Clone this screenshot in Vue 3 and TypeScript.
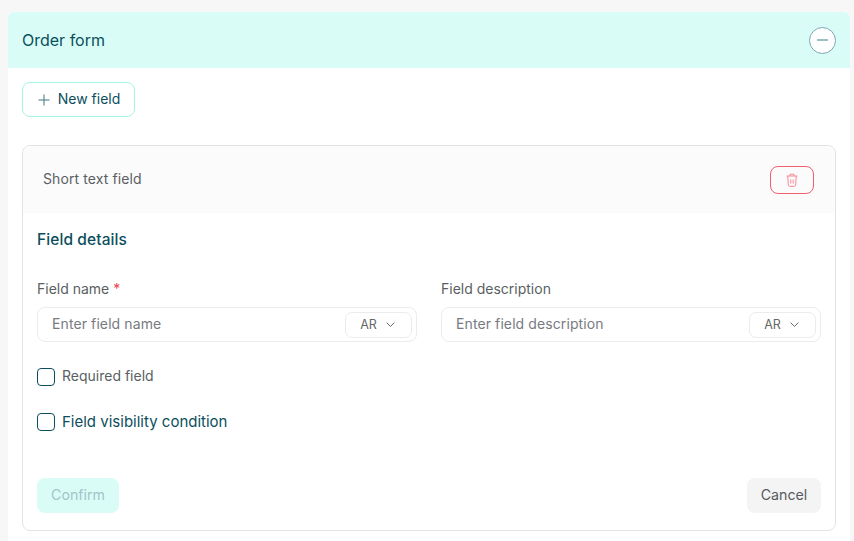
<template>
  <div class="page">
    <section class="panel">
      <header class="panel-head">
        <h1>Order form</h1>
        <button type="button" class="collapse-btn" aria-label="Collapse">
          <span class="minus"></span>
        </button>
      </header>
      <div class="panel-body">
        <button type="button" class="new-btn">
          <svg width="12" height="12" viewBox="0 0 12 12" fill="none" stroke="#3f7683" stroke-width="1">
            <path d="M6 .5v11M.5 6h11" />
          </svg>
          <span class="new-text">New field</span>
        </button>
        <div class="card">
          <div class="card-head">
            <span class="head-title">Short text field</span>
            <button type="button" class="trash-btn" aria-label="Delete">
              <svg width="14" height="14" viewBox="0 0 14 14" fill="none" stroke="#f58a93" stroke-width="1">
                <path d="M1.5 3h11M5 3V1.2h4V3M2.8 3l.5 9.2c0 .7.5 1.1 1.1 1.1h5.2c.6 0 1.1-.4 1.1-1.1l.5-9.2M5.8 6.5v4M8.2 6.5v4" />
              </svg>
            </button>
          </div>
          <div class="card-body">
            <h2>Field details</h2>
            <div class="field-grid">
              <div v-for="f in fields" :key="f.label" class="field">
                <label>{{ f.label }} <em v-if="f.required">*</em></label>
                <div class="input-box">
                  <input type="text" :placeholder="f.placeholder" />
                  <button type="button" class="lang-btn">
                    <span>AR</span>
                    <svg width="9" height="5" viewBox="0 0 9 5" fill="none" stroke="#666" stroke-width="1">
                      <path d="M.6.6 4.5 4.4 8.4.6" />
                    </svg>
                  </button>
                </div>
              </div>
            </div>
            <label class="check first">
              <span class="box"></span>
              <span class="check-text">Required field</span>
            </label>
            <label class="check second">
              <span class="box"></span>
              <span>Field visibility condition</span>
            </label>
            <div class="actions">
              <button type="button" class="confirm-btn">Confirm</button>
              <button type="button" class="cancel-btn">Cancel</button>
            </div>
          </div>
        </div>
      </div>
    </section>
  </div>
</template>

<script setup lang="ts">
const fields = [
  { label: 'Field name', placeholder: 'Enter field name', required: true },
  { label: 'Field description', placeholder: 'Enter field description', required: false },
]
</script>

<style>
html,
body {
  margin: 0;
  background: #f7f7f7;
}
</style>

<style scoped>
.page {
  height: 541px;
  padding: 12px 4px 0 8px;
  box-sizing: border-box;
  overflow: hidden;
  font-family: Inter, "Open Sans", sans-serif;
  color: #0b4f5c;
}
button {
  font-family: inherit;
  cursor: pointer;
}
.panel {
  background: #fff;
  border-radius: 6px 6px 0 0;
  height: 529px;
}
.panel-head {
  height: 56px;
  display: flex;
  align-items: center;
  justify-content: space-between;
  padding: 0 14px;
  background: #d9fdf6;
  border-radius: 6px 6px 0 0;
}
.panel-head h1 {
  margin: 0;
  font-size: 16px;
  font-weight: 400;
}
.collapse-btn {
  width: 27px;
  height: 27px;
  padding: 0;
  display: flex;
  align-items: center;
  justify-content: center;
  background: #fff;
  border: 1px solid #7ba7b3;
  border-radius: 50%;
}
.minus {
  width: 11px;
  height: 1.5px;
  background: #9dbfc6;
}
.panel-body {
  padding: 14px;
}
.new-btn {
  width: 113px;
  height: 35px;
  display: flex;
  align-items: center;
  justify-content: center;
  gap: 8px;
  padding: 0 0 0 1px;
  background: #fff;
  border: 1px solid #a5f5e5;
  border-radius: 8px;
  font-size: 14px;
  color: #0b4f5c;
}
.new-text {
  margin-bottom: 2px;
}
.card {
  margin-top: 28px;
  height: 386px;
  box-sizing: border-box;
  border: 1px solid #e3e3e3;
  border-radius: 8px;
}
.card-head {
  height: 67px;
  display: flex;
  align-items: center;
  justify-content: space-between;
  padding: 0 21px 0 20px;
  background: #fbfbfb;
  border-radius: 8px 8px 0 0;
  font-size: 14px;
  letter-spacing: 0.1px;
  color: #5a5f63;
}
.head-title {
  margin-bottom: 2px;
}
.trash-btn {
  width: 44px;
  height: 28px;
  padding: 0;
  display: flex;
  align-items: center;
  justify-content: center;
  background: transparent;
  border: 1px solid #f0606c;
  border-radius: 8px;
}
.card-body {
  padding: 17px 14px 0;
}
.card-body h2 {
  margin: 0;
  font-size: 15.5px;
  line-height: 20px;
  font-weight: 500;
  letter-spacing: 0.1px;
}
.field-grid {
  display: grid;
  grid-template-columns: 380px 380px;
  gap: 24px;
  margin-top: 30px;
}
.field label {
  display: block;
  font-size: 14px;
  line-height: 18px;
  color: #5a5f63;
}
.field em {
  font-style: normal;
  color: #f0404c;
}
.input-box {
  margin-top: 9px;
  height: 35px;
  box-sizing: border-box;
  display: flex;
  align-items: center;
  padding: 0 4px 0 14px;
  border: 1px solid #ececec;
  border-radius: 8px;
}
.input-box input {
  flex: 1;
  min-width: 0;
  margin-bottom: 2px;
  border: 0;
  outline: 0;
  padding: 0;
  font-family: inherit;
  font-size: 14px;
  letter-spacing: 0.1px;
}
.input-box input::placeholder {
  color: #777b7f;
  opacity: 1;
}
.lang-btn {
  width: 67px;
  height: 26px;
  display: flex;
  align-items: center;
  justify-content: center;
  gap: 9px;
  padding: 0 2px 0 0;
  background: #fff;
  border: 1px solid #ececec;
  border-radius: 7px;
  font-size: 12.5px;
  color: #666;
}
.lang-btn span {
  margin-bottom: 1px;
}
.check {
  display: flex;
  align-items: center;
  gap: 7px;
}
.check.first {
  margin-top: 26px;
  font-size: 14px;
  color: #5a5f63;
}
.check-text {
  line-height: 14px;
  margin-bottom: 2px;
}
.check.second {
  margin-top: 26px;
  font-size: 15px;
}
.box {
  width: 18px;
  height: 18px;
  box-sizing: border-box;
  border: 1.5px solid #0b4f5c;
  border-radius: 4px;
}
.actions {
  display: flex;
  justify-content: space-between;
  margin-top: 47px;
}
.confirm-btn,
.cancel-btn {
  height: 35px;
  padding: 0 0 2px;
  border: 0;
  border-radius: 8px;
  font-size: 14.2px;
}
.confirm-btn {
  width: 82px;
  background: #d9fdf6;
  color: #a3c4c8;
}
.cancel-btn {
  width: 74px;
  background: #f4f4f4;
  color: #555b60;
}
</style>
